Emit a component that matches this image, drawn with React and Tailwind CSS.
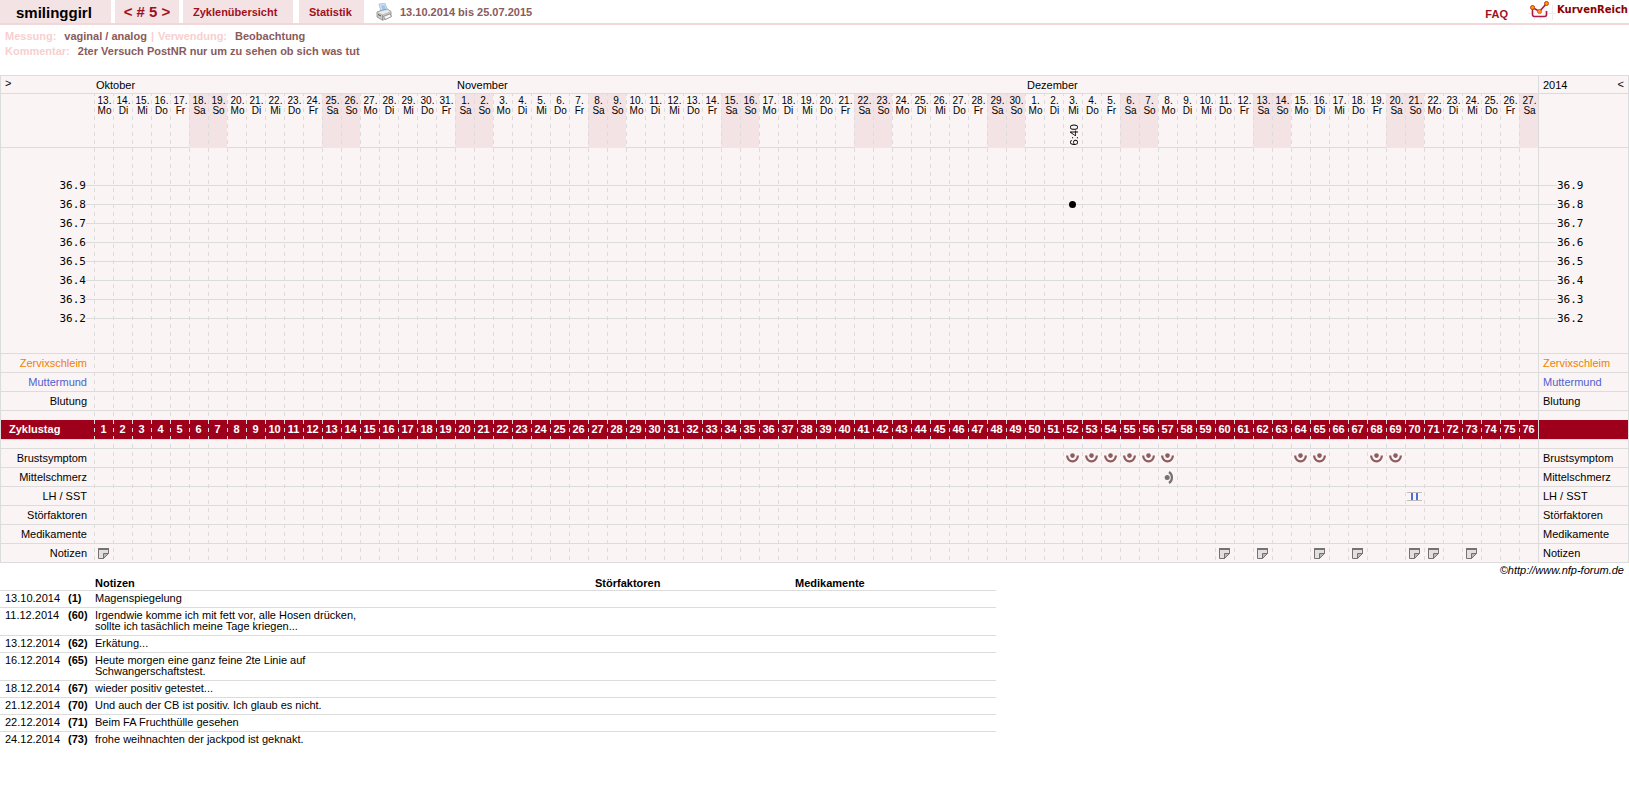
import React from "react";

const weekdays = ["Mo", "Di", "Mi", "Do", "Fr", "Sa", "So"];

const months = [
  { name: "Oktober", first: 13, last: 31 },
  { name: "November", first: 1, last: 30 },
  { name: "Dezember", first: 1, last: 27 },
];

// one entry for each column of the chart
const days = months
  .flatMap((m) =>
    Array.from({ length: m.last - m.first + 1 }, (_, i) => m.first + i)
  )
  .map((date, i) => ({
    date,
    cycleDay: i + 1,
    weekday: weekdays[i % 7],
    weekend: i % 7 > 4,
  }));

const temperatures = ["36.9", "36.8", "36.7", "36.6", "36.5", "36.4", "36.3", "36.2"];
const measured = { 52: { value: "36.8", time: "6:40" } };

const upperRows = [
  { label: "Zervixschleim", color: "text-[#f08000]" },
  { label: "Muttermund", color: "text-[#4f62d0]" },
  { label: "Blutung", color: "text-black" },
];

const BreastIcon = () => (
  <svg width="13" height="10" viewBox="0 0 13 10" className="mx-auto block">
    <path d="M1.200 2.500v.5a5.300 5.300 0 0 0 10.600 0v-.5" fill="none" stroke="#8e5c5e" strokeWidth="2.200" />
    <circle cx="6.5" cy="2.6" r="2.3" fill="#8e5c5e" />
  </svg>
);

const PainIcon = () => (
  <svg width="13" height="13" viewBox="0 0 13 13" className="mx-auto block">
    <path d="M8 1a6.6 6.6 0 0 1 0 11" fill="none" stroke="#777174" strokeWidth="2.200" />
    <circle cx="6.2" cy="6.5" r="2.5" fill="#777174" />
  </svg>
);

const TestIcon = () => (
  <svg width="15" height="9" viewBox="0 0 15 9" className="mx-auto block">
    <path d="M0 .5h15M0 8.500h15" stroke="#c0bcbc" />
    <path d="M5 1v7M10 1v7" stroke="#4f6fd6" strokeWidth="2" />
  </svg>
);

const NoteIcon = () => (
  <svg width="11" height="11" viewBox="0 0 11 11" className="mx-auto block">
    <path d="M.5 1h10v4.5l-5 5h-5z" fill="#e2e0e1" stroke="#777174" />
    <path d="M0 1h11" stroke="#777174" strokeWidth="2" />
    <path d="M5.5 10.5v-5h5z" fill="#bab7b8" stroke="#777174" />
  </svg>
);

const lowerRows = [
  { label: "Brustsymptom", icon: BreastIcon, on: [52, 53, 54, 55, 56, 57, 64, 65, 68, 69] },
  { label: "Mittelschmerz", icon: PainIcon, on: [57] },
  { label: "LH / SST", icon: TestIcon, on: [70] },
  { label: "Störfaktoren", on: [] },
  { label: "Medikamente", on: [] },
  { label: "Notizen", icon: NoteIcon, on: [1, 60, 62, 65, 67, 70, 71, 73] },
];

const notes = [
  { date: "13.10.2014", day: 1, text: "Magenspiegelung" },
  {
    date: "11.12.2014",
    day: 60,
    text: "Irgendwie komme ich mit fett vor, alle Hosen drücken, sollte ich tasächlich meine Tage kriegen...",
  },
  { date: "13.12.2014", day: 62, text: "Erkätung..." },
  {
    date: "16.12.2014",
    day: 65,
    text: "Heute morgen eine ganz feine 2te Linie auf Schwangerschaftstest.",
  },
  { date: "18.12.2014", day: 67, text: "wieder positiv getestet..." },
  { date: "21.12.2014", day: 70, text: "Und auch der CB ist positiv. Ich glaub es nicht." },
  { date: "22.12.2014", day: 71, text: "Beim FA Fruchthülle gesehen" },
  { date: "24.12.2014", day: 73, text: "frohe weihnachten der jackpod ist geknakt." },
];

const Printer = () => (
  <svg width="16" height="18" viewBox="0 0 16 18" className="block">
    <path d="M3 1l6-.8 2.500 7-6.500 1.500z" fill="#d3e6f8" stroke="#9ab4cf" strokeWidth=".7" />
    <path d="M5 2.500l3.500-.4 1.700 4.400-4 .8z" fill="#9fc6ee" />
    <path d="M1 9l4-1.500 6.500-1.300 3.500 2.300v5l-8.500 3.800L1 14z" fill="#c9c9c9" stroke="#8b8b8b" strokeWidth=".8" />
    <path d="M1 9l5.500 2.800L15 8.500l-3.500-2-6.500 1.500z" fill="#ececec" stroke="#a5a5a5" strokeWidth=".5" />
    <path d="M6.500 12v5" stroke="#8b8b8b" strokeWidth=".8" />
    <path d="M7.500 13.500l6.500-2.600 1.500 2.600-6 3z" fill="#f8f8f8" stroke="#777" strokeWidth=".7" />
    <path d="M2 11.500l3 1.500" stroke="#555" />
  </svg>
);

const Logo = () => (
  <svg width="28" height="20" viewBox="0 0 28 20" className="block">
    <path d="M0 13.500h28M6.500 5v15M12.500 8v12M18.500 8v12M24.500 5v15" stroke="#eee" />
    <path d="M4.500 8v6.500q0 2 2 2h10q2 0 2-2V4L11.500 11.500z" fill="#fdf6f7" />
    <path
      d="M4.500 8v6.500q0 2 2 2h10q2 0 2-2V11M4.500 7.500l7 4 7-8"
      fill="none"
      stroke="#b01848"
      strokeWidth="1.600"
    />
    <circle cx="4.500" cy="7.500" r="2" fill="#ff9a00" stroke="#b5401c" />
    <circle cx="11.500" cy="11.500" r="2" fill="#ff9a00" stroke="#d5601c" />
    <circle cx="18.500" cy="3.500" r="2" fill="#ff9a00" stroke="#b5401c" />
  </svg>
);

const Header = () => (
  <header className="flex h-[25px] border-b-2 border-[#f2d7d9] text-[11px] font-bold text-[#a01020]">
    <h1 className="mr-1 flex w-[111px] items-center bg-[#f4e3e5] pt-1 pl-4 text-[15px] text-black">
      smilinggirl
    </h1>
    <nav className="flex">
      <div className="mr-1 flex w-16 items-center justify-center gap-1 bg-[#f4e3e5] pt-px text-[15px]">
        <a href="#prev">&lt;</a>
        <span># 5</span>
        <a href="#next">&gt;</a>
      </div>
      <a href="#zyklen" className="mr-1.5 flex w-[110px] items-center bg-[#f4e3e5] pt-px pl-2.5">
        Zyklenübersicht
      </a>
      <a href="#statistik" className="flex w-[65px] items-center bg-[#f4e3e5] pt-px pl-2.5">
        Statistik
      </a>
    </nav>
    <div className="flex items-center gap-2 pt-px pl-3 text-[#8a5a5c]">
      <button type="button" aria-label="Drucken">
        <Printer />
      </button>
      <span>13.10.2014 bis 25.07.2015</span>
    </div>
    <div className="ml-auto flex">
      <a href="#faq" className="mt-1.5 mr-5">
        FAQ
      </a>
      <a
        href="#home"
        className="flex font-[DejaVu_Sans,sans-serif] text-[10px] leading-5 text-[#8b0000]"
      >
        <Logo />
        <span className="px-px">KurvenReich</span>
      </a>
    </div>
  </header>
);

const Info = () => (
  <dl className="px-[5px] pt-1 pb-4 text-[11px] leading-[15px] font-bold text-[#8a5a5c]">
    <div className="flex">
      <dt className="mr-2 text-[#f8cfcf]">Messung:</dt>
      <dd>vaginal / analog</dd>
      <span className="mx-1 text-[#f8cfcf]">|</span>
      <dt className="mr-2 text-[#f8cfcf]">Verwendung:</dt>
      <dd>Beobachtung</dd>
    </div>
    <div className="flex">
      <dt className="mr-2 text-[#f8cfcf]">Kommentar:</dt>
      <dd>2ter Versuch PostNR nur um zu sehen ob sich was tut</dd>
    </div>
  </dl>
);

const Row = ({ label, color = "text-black", icon: Icon, on = [] }) => (
  <tr className="h-[19px]">
    <th className={`border-b border-[#dcdcdc] pr-[7px] text-right font-normal ${color}`}>{label}</th>
    {days.map((d) => (
      <td key={d.cycleDay} className="border-b border-[#dcdcdc]">
        {on.includes(d.cycleDay) && <Icon />}
      </td>
    ))}
    <th className={`border-b border-l border-[#dcdcdc] pl-1 text-left font-normal ${color}`}>
      {label}
    </th>
  </tr>
);

const Chart = () => (
  <div className="relative border-x border-t border-[#dcdcdc] bg-[#faf4f4]">
    <table className="w-full table-fixed border-separate border-spacing-0 text-[11px] leading-[13px]">
      <colgroup>
        <col className="w-[93px]" />
        <col span={76} />
        <col className="w-[90px]" />
      </colgroup>
      <thead>
        <tr className="h-[18px]">
          <th className="border-b border-[#dcdcdc] pb-0.5 pl-1 text-left font-normal">
            <a href="#zurueck">&gt;</a>
          </th>
          {months.map((m) => (
            <th
              key={m.name}
              colSpan={m.last - m.first + 1}
              className="border-b border-[#dcdcdc] pt-0.5 pl-0.5 text-left font-normal"
            >
              {m.name}
            </th>
          ))}
          <th className="border-b border-l border-[#dcdcdc] px-1 pt-0.5 font-normal">
            <div className="flex justify-between">
              <span>2014</span>
              <a href="#weiter" className="leading-[10px]">
                &lt;
              </a>
            </div>
          </th>
        </tr>
        <tr className="h-[54px]">
          <td className="border-b border-[#dcdcdc]" />
          {days.map((d) => (
            <th
              key={d.cycleDay}
              className={`border-b pt-0.5 pl-0.5 align-top text-[10px] leading-[10px] font-normal whitespace-nowrap ${
                d.weekend ? "border-[#f4e3e5] bg-[#f4e3e5]" : "border-[#dcdcdc]"
              }`}
            >
              {d.date}.<br />
              {d.weekday}
              {measured[d.cycleDay] && (
                <div className="mt-2 flex justify-center text-[11px]">
                  <span className="rotate-180 [writing-mode:vertical-rl]">
                    {measured[d.cycleDay].time}
                  </span>
                </div>
              )}
            </th>
          ))}
          <td className="border-b border-l border-[#dcdcdc]" />
        </tr>
      </thead>
      <tbody>
        <tr className="h-7">
          <td colSpan={77} />
          <td className="border-l border-[#dcdcdc]" />
        </tr>
        {temperatures.map((t) => (
          <tr key={t} className="h-[19px] font-[DejaVu_Sans_Mono,monospace]">
            <th className="font-normal">
              <div className="flex items-center justify-end">
                {t}
                <span className="h-px w-2 bg-[#dcdcdc]" />
              </div>
            </th>
            {days.map((d) => (
              <td
                key={d.cycleDay}
                className="bg-[linear-gradient(#dcdcdc,#dcdcdc)] bg-[length:100%_1px] bg-center bg-no-repeat"
              >
                {measured[d.cycleDay]?.value === t && (
                  <span className="relative z-10 mx-auto block size-[7px] rounded-full bg-black" />
                )}
              </td>
            ))}
            <th className="border-l border-[#dcdcdc] font-normal">
              <div className="flex items-center">
                <span className="h-px w-[18px] bg-[#dcdcdc]" />
                {t}
              </div>
            </th>
          </tr>
        ))}
        <tr className="h-[26px]">
          <td colSpan={77} className="border-b border-[#dcdcdc]" />
          <td className="border-b border-l border-[#dcdcdc]" />
        </tr>
        {upperRows.map((r) => (
          <Row key={r.label} {...r} />
        ))}
        <tr className="h-[9px]">
          <td colSpan={77} />
          <td className="border-l border-[#dcdcdc]" />
        </tr>
        <tr className="h-[19px] bg-[#9e001c] font-bold text-white">
          <th className="pl-2 text-left">Zyklustag</th>
          {days.map((d) => (
            <td key={d.cycleDay} className="text-center">
              {d.cycleDay}
            </td>
          ))}
          <td className="border-l border-[#dcdcdc]" />
        </tr>
        <tr className="h-[10px]">
          <td colSpan={77} className="border-y border-[#dcdcdc]" />
          <td className="border-y border-l border-[#dcdcdc]" />
        </tr>
        {lowerRows.map((r) => (
          <Row key={r.label} {...r} />
        ))}
      </tbody>
    </table>
    {/* dashed separators between the days */}
    <div
      aria-hidden="true"
      className="pointer-events-none absolute top-[18px] right-[90px] bottom-0 left-[93px] bg-[linear-gradient(90deg,#dcdcdc_1px,transparent_1px)] bg-[length:calc(100%/76)_100%] [mask-image:repeating-linear-gradient(#000_0_2px,transparent_2px_6px,#000_6px_8px)]"
    />
  </div>
);

const Notes = () => (
  <table className="w-[996px] max-w-full table-fixed border-separate border-spacing-0 text-left text-[11px] leading-[11px]">
    <colgroup>
      <col className="w-[68px]" />
      <col className="w-[27px]" />
      <col className="w-[500px]" />
      <col className="w-[200px]" />
      <col />
    </colgroup>
    <thead>
      <tr>
        <td colSpan={2} />
        <th className="py-px">Notizen</th>
        <th className="py-px">Störfaktoren</th>
        <th className="py-px">Medikamente</th>
      </tr>
    </thead>
    <tbody>
      {notes.map((n) => (
        <tr key={n.day} className="align-top">
          <td className="border-t border-[#dcdcdc] pt-0.5 pb-[3px] pl-[5px]">{n.date}</td>
          <th className="border-t border-[#dcdcdc] pt-0.5 pb-[3px]">({n.day})</th>
          <td className="border-t border-[#dcdcdc] pt-0.5 pb-[3px]">
            <div className="max-w-[270px]">{n.text}</div>
          </td>
          <td className="border-t border-[#dcdcdc]" />
          <td className="border-t border-[#dcdcdc]" />
        </tr>
      ))}
    </tbody>
  </table>
);

const App = () => {
  return (
    <div className="min-h-screen bg-white font-[Liberation_Sans,Arial,sans-serif] text-black">
      <Header />
      <main>
        <Info />
        <Chart />
        <p className="pr-[5px] text-right text-[11px] leading-[14px] italic">
          ©<a href="#forum">http://www.nfp-forum.de</a>
        </p>
        <Notes />
      </main>
    </div>
  );
};

export default App;
